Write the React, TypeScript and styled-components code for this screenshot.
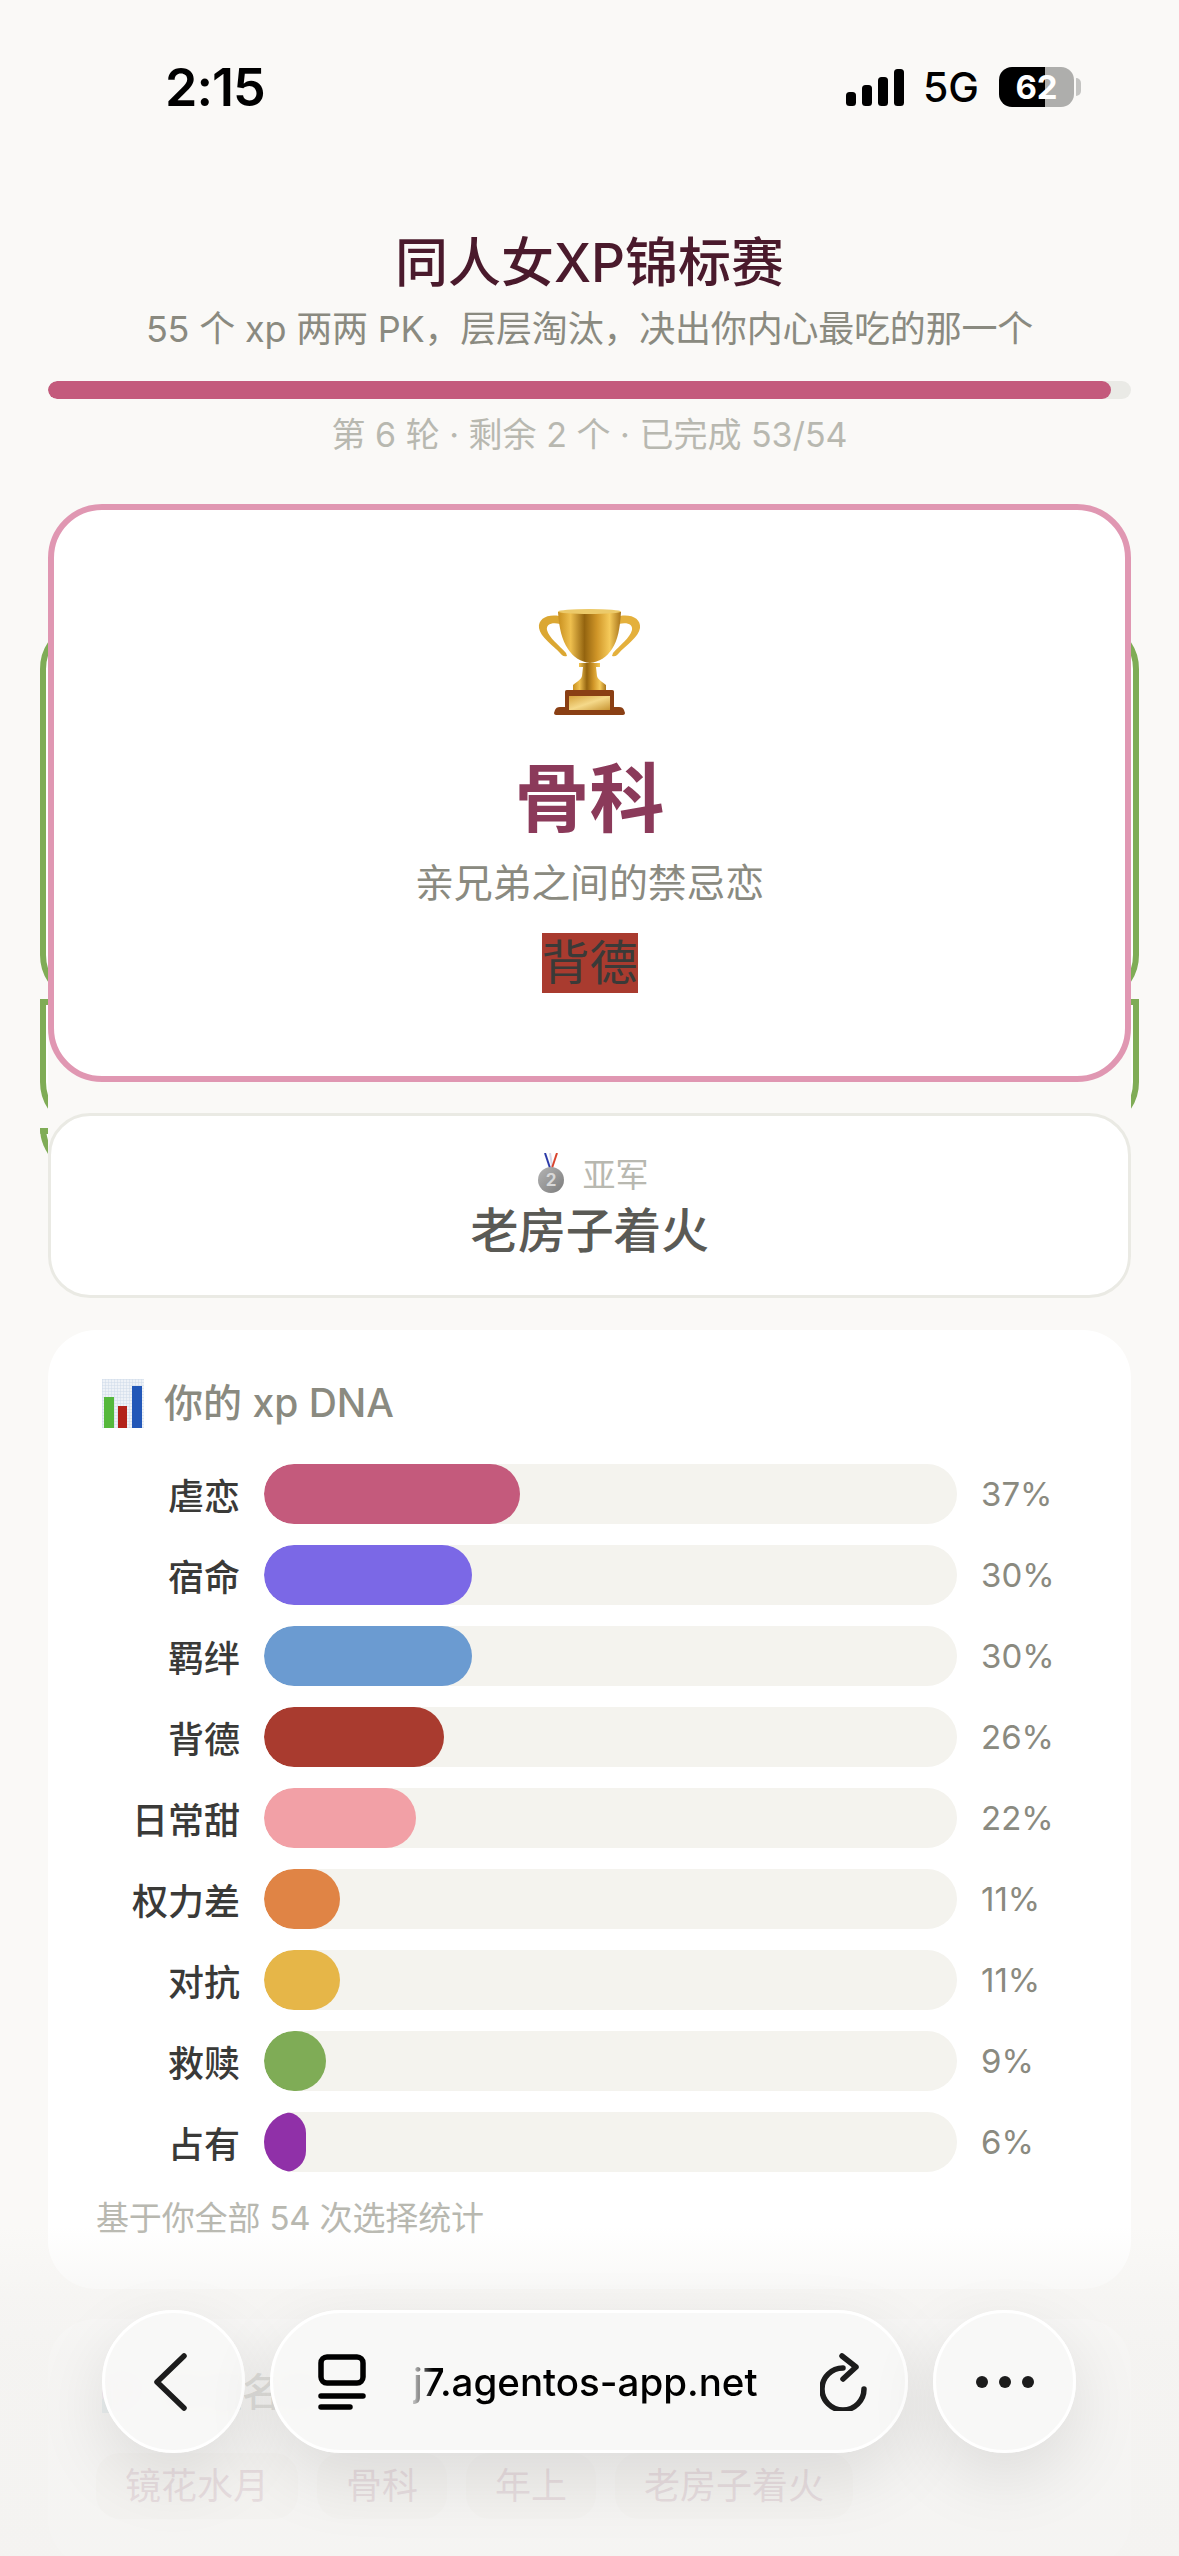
import styled, { createGlobalStyle } from 'styled-components';

const GlobalStyle = createGlobalStyle`
  html, body {
    margin: 0;
    padding: 0;
    background: #faf9f7;
  }
  body {
    font-family: Inter, "Noto Sans CJK SC", sans-serif;
  }
`;

const Page = styled.div`
  position: relative;
  width: 1179px;
  height: 2556px;
  overflow: hidden;
  background: #faf9f7;
`;

const StatusBar = styled.div`
  height: 174px;
  margin-bottom: 53px;
  padding: 0 98px 0 165px;
  box-sizing: border-box;
  display: flex;
  align-items: center;
  justify-content: space-between;
`;

const Clock = styled.div`
  font-size: 52px;
  font-weight: 600;
  letter-spacing: -1px;
  color: #000;
`;

const StatusIcons = styled.div`
  display: flex;
  align-items: center;
`;

const Network = styled.span`
  margin: 0 20px 0 19px;
  font-size: 41px;
  font-weight: 500;
  color: #000;
`;

const Battery = styled.div`
  position: relative;
  width: 75px;
  height: 40px;
  border-radius: 13px;
  overflow: hidden;
  background: linear-gradient(90deg, #000 62%, #aeaeac 62%);
  color: #fff;
  font-size: 33px;
  font-weight: 700;
  line-height: 40px;
  text-align: center;
`;

const BatteryCap = styled.div`
  width: 5px;
  height: 18px;
  margin-left: 2px;
  border-radius: 0 9px 9px 0;
  background: #c4c4c2;
`;

const Header = styled.header`
  text-align: center;
`;

const Title = styled.h1`
  margin: 0;
  font-size: 53px;
  font-weight: 500;
  line-height: 72px;
  color: #4a1a2c;
`;

const Subtitle = styled.p`
  margin: 3px 0 0;
  font-size: 36px;
  letter-spacing: -0.2px;
  line-height: 54px;
  color: #8a8a80;
`;

const ProgressTrack = styled.div`
  height: 18px;
  margin: 25px 48px 0;
  border-radius: 9px;
  overflow: hidden;
  background: #eaeae6;
`;

const ProgressFill = styled.div`
  height: 100%;
  border-radius: 9px;
  background: #c45a7c;
`;

const ProgressMeta = styled.p`
  margin: 16px 0 49px;
  font-size: 34px;
  line-height: 40px;
  text-align: center;
  color: #b8b8b0;
`;

const Stage = styled.section`
  position: relative;
  padding: 0 48px;
`;

// leftovers of the swipe cards peeking out behind the podium
const GhostCard = styled.div<{ $top: number; $height: number; $flatTop?: boolean; $leftOnly?: boolean }>`
  position: absolute;
  top: ${({ $top }) => $top}px;
  left: 40px;
  width: 1099px;
  height: ${({ $height }) => $height}px;
  box-sizing: border-box;
  border: 6px solid #7fac56;
  border-radius: ${({ $flatTop }) => ($flatTop ? '0 0 48px 48px' : '48px')};
  background: #fff;
  clip-path: ${({ $leftOnly }) =>
    $leftOnly
      ? 'polygon(0 0, 8px 0, 8px 100%, 0 100%)'
      : 'polygon(0 0, 8px 0, 8px 100%, 0 100%, 0 0, 100% 0, 100% 100%, calc(100% - 8px) 100%, calc(100% - 8px) 0, 0 0)'};
`;

const ChampionCard = styled.div`
  position: relative;
  height: 578px;
  box-sizing: border-box;
  padding-top: 98px;
  border: 6px solid #e097b2;
  border-radius: 54px;
  background: #fff;
  display: flex;
  flex-direction: column;
  align-items: center;
`;

const ChampionName = styled.div`
  margin-top: 39px;
  font-size: 75px;
  font-weight: 700;
  line-height: 90px;
  color: #8b3a5a;
`;

const ChampionDesc = styled.div`
  margin-top: 12px;
  font-size: 39px;
  letter-spacing: -0.2px;
  line-height: 54px;
  color: #8a8a80;
`;

const ChampionTag = styled.span`
  margin-top: 23px;
  width: 96px;
  font-size: 48px;
  line-height: 60px;
  white-space: nowrap;
  background: #a93b2f;
  color: #3a3a38;
`;

const RunnerCard = styled.div`
  position: relative;
  height: 185px;
  margin-top: 31px;
  box-sizing: border-box;
  padding-top: 37px;
  border: 3px solid #eaeae4;
  border-radius: 42px;
  background: #fff;
  display: flex;
  flex-direction: column;
  align-items: center;
`;

const RunnerLabel = styled.div`
  height: 40px;
  padding-left: 6px;
  display: flex;
  align-items: center;
  gap: 18px;
  font-size: 33px;
  color: #b8b8b0;
`;

const RunnerName = styled.div`
  margin-top: 6px;
  font-size: 48px;
  font-weight: 500;
  letter-spacing: -0.4px;
  line-height: 64px;
  color: #5a5a55;
`;

const Panel = styled.section<{ $gap: number }>`
  margin: ${({ $gap }) => $gap}px 48px 0;
  padding: 48px;
  border-radius: 48px;
  background: #fff;
`;

const PanelTitle = styled.h2`
  margin: 0 0 36px 6px;
  display: flex;
  align-items: center;
  gap: 20px;
  font-size: 39px;
  font-weight: 500;
  line-height: 50px;
  color: #8a8a80;
`;

const Bars = styled.div`
  display: flex;
  flex-direction: column;
  gap: 21px;
`;

const BarRow = styled.div`
  display: grid;
  grid-template-columns: 144px 1fr 102px;
  column-gap: 24px;
  align-items: center;
`;

const BarLabel = styled.span`
  font-size: 36px;
  font-weight: 500;
  text-align: right;
  color: #3a3a38;
`;

const BarTrack = styled.div`
  height: 60px;
  border-radius: 30px;
  overflow: hidden;
  background: #f4f3ee;
`;

const BarFill = styled.div<{ $color: string }>`
  height: 100%;
  border-radius: 30px;
  background: ${({ $color }) => $color};
`;

const BarValue = styled.span`
  font-size: 33px;
  color: #8a8a80;
`;

const PanelNote = styled.p`
  margin: 24px 0 0;
  font-size: 33px;
  letter-spacing: -0.15px;
  line-height: 45px;
  color: #b8b8b0;
`;

const ChipRow = styled.div`
  display: flex;
  gap: 19px;
`;

const Chip = styled.span`
  padding: 0 29px;
  border-radius: 24px;
  font-size: 36px;
  line-height: 66px;
  background: #f4f2ee;
  color: #a8748a;
`;

const BottomFade = styled.div`
  position: absolute;
  left: 0;
  right: 0;
  bottom: 0;
  height: 330px;
  background: linear-gradient(
    180deg,
    rgba(243, 242, 240, 0) 0%,
    rgba(243, 242, 240, 0.6) 22%,
    rgba(243, 242, 240, 0.8) 40%,
    rgba(243, 242, 240, 0.84) 100%
  );
`;

const BrowserBar = styled.nav`
  position: absolute;
  left: 102px;
  top: 2310px;
  display: flex;
  gap: 25px;
`;

const Pill = styled.div<{ $wide?: boolean }>`
  width: ${({ $wide }) => ($wide ? '638px' : '143px')};
  height: 143px;
  box-sizing: border-box;
  border: 3px solid #fff;
  border-radius: 72px;
  background: rgba(248, 248, 247, 0.94);
  backdrop-filter: blur(8px);
  box-shadow: 0 24px 70px rgba(0, 0, 0, 0.1);
  display: flex;
  align-items: center;
  justify-content: center;
`;

const UrlPill = styled(Pill)`
  justify-content: flex-start;
  padding-left: 45px;
`;

const UrlText = styled.span`
  margin-left: 47px;
  width: 346px;
  font-size: 38.5px;
  font-weight: 500;
  white-space: nowrap;
  color: #000;
  mask-image: linear-gradient(90deg, rgba(0, 0, 0, 0.2), #000 20px);
`;

const ReloadWrap = styled.span`
  margin-left: 61px;
  display: flex;
`;

const BackGlyph = styled.svg`
  margin-right: 8px;
`;

const Trophy = () => (
  <svg width="103" height="107" viewBox="0 0 103 107">
    <defs>
      <linearGradient id="cup" x1="0" x2="1" y1="0" y2="0">
        <stop offset="0" stopColor="#c88f1e" />
        <stop offset="0.2" stopColor="#eebf4e" />
        <stop offset="0.42" stopColor="#94640f" />
        <stop offset="0.62" stopColor="#d09628" />
        <stop offset="0.82" stopColor="#f5ca5a" />
        <stop offset="1" stopColor="#a8741a" />
      </linearGradient>
      <linearGradient id="plate" x1="0" x2="1" y1="0" y2="1">
        <stop offset="0" stopColor="#d7a33c" />
        <stop offset="0.5" stopColor="#f5d98a" />
        <stop offset="1" stopColor="#c89532" />
      </linearGradient>
    </defs>
    <path d="M21 8C9 6 0 11 1 20c1 9 15 18 21 25 2 2 3 4 7 3l-1-3c-7-8-17-15-19-23-1-5 4-8 13-6z" fill="#dba732" />
    <path d="M82 8c12-2 21 3 20 12-1 9-15 18-21 25-2 2-3 4-7 3l1-3c7-8 17-15 19-23 1-5-4-8-13-6z" fill="#e4b03c" />
    <path d="M20 4c20-3 43-3 63 0-1 16-3 28-9 37-5 8-13 13-22 14-9-1-17-6-22-14-6-9-9-21-10-37z" fill="url(#cup)" />
    <ellipse cx="51.5" cy="3.5" rx="31.5" ry="2.5" fill="#ecca6a" />
    <path d="M41 55h21v4h-4l1 9c1 4 6 6 9 9v5H35v-5c3-3 8-5 9-9l1-9h-4z" fill="url(#cup)" />
    <path d="M29 82h45c2 0 2 1 2 3v14H27V85c0-2 0-3 2-3z" fill="#8a3f14" />
    <path d="M22 99h59c3 0 4 1 5 3l1 3c0 1-1 2-2 2H18c-1 0-2-1-2-2l1-3c1-2 2-3 5-3z" fill="#8a3f14" />
    <rect x="31" y="88" width="41" height="14" fill="url(#plate)" />
  </svg>
);

const SilverMedal = () => (
  <svg width="28" height="40" viewBox="0 0 28 40">
    <defs>
      <linearGradient id="silver" x1="0" x2="1" y1="0" y2="1">
        <stop offset="0" stopColor="#b4b4b4" />
        <stop offset="1" stopColor="#7c7c7c" />
      </linearGradient>
    </defs>
    <path d="M8 0l5 15" stroke="#2b3aa8" strokeWidth="2" fill="none" />
    <path d="M13 0l2 13" stroke="#d9d9e8" strokeWidth="2" fill="none" />
    <path d="M20 0l-5 15" stroke="#d9442e" strokeWidth="2" fill="none" />
    <circle cx="14" cy="27" r="13" fill="url(#silver)" />
    <text x="14" y="33" textAnchor="middle" fontSize="17" fontWeight="700" fontFamily="Inter" fill="#d8d8d8">
      2
    </text>
  </svg>
);

const ChartEmoji = () => (
  <svg width="42" height="49" viewBox="0 0 42 49">
    <defs>
      <pattern id="grid" width="3" height="3" patternUnits="userSpaceOnUse">
        <rect width="3" height="3" fill="#eef2f7" />
        <path d="M0 0h3M0 0v3" stroke="#cfdbe9" strokeWidth="1" />
      </pattern>
    </defs>
    <rect width="42" height="49" fill="url(#grid)" />
    <rect x="2" y="18" width="10" height="31" fill="#55b83c" />
    <rect x="16" y="27" width="9" height="22" fill="#b3221a" />
    <rect x="30" y="7" width="10" height="42" fill="#2257b8" />
  </svg>
);

const SmudgeEmoji = () => (
  <svg width="42" height="46" viewBox="0 0 42 46">
    <path d="M4 8c10-8 28-8 34 2s0 28-14 32S0 36 0 26 0 12 4 8z" fill="#e6c4ea" />
    <rect x="0" y="30" width="10" height="14" fill="#b9d8e0" />
  </svg>
);

const ChevronLeft = () => (
  <BackGlyph width="36" height="58" viewBox="0 0 36 58">
    <path d="M32 3L5 29l27 26" fill="none" stroke="#1c1c1c" strokeWidth="5.5" strokeLinecap="round" strokeLinejoin="round" />
  </BackGlyph>
);

const TabsIcon = () => (
  <svg width="48" height="56" viewBox="0 0 48 56">
    <rect x="3" y="3" width="42" height="26" rx="6" fill="none" stroke="#000" strokeWidth="5.5" />
    <path d="M3 42h42M3 53h29" stroke="#000" strokeWidth="5.5" strokeLinecap="round" />
  </svg>
);

const ReloadIcon = () => (
  <svg width="50" height="58" viewBox="0 0 50 58">
    <path d="M23 15a21 21 0 1 0 21 21" fill="none" stroke="#1c1c1c" strokeWidth="5.5" strokeLinecap="round" />
    <path d="M22 3l14 11-13 12" fill="none" stroke="#1c1c1c" strokeWidth="5.5" strokeLinecap="round" strokeLinejoin="round" />
  </svg>
);

const MoreIcon = () => (
  <svg width="60" height="14" viewBox="0 0 60 14">
    <circle cx="7" cy="7" r="6" fill="#1c1c1c" />
    <circle cx="30" cy="7" r="6" fill="#1c1c1c" />
    <circle cx="53" cy="7" r="6" fill="#1c1c1c" />
  </svg>
);

const SignalIcon = () => (
  <svg width="58" height="37" viewBox="0 0 58 37">
    <rect x="0" y="23" width="10" height="14" rx="3.5" fill="#000" />
    <rect x="16" y="16" width="10" height="21" rx="3.5" fill="#000" />
    <rect x="32" y="8" width="10" height="29" rx="3.5" fill="#000" />
    <rect x="48" y="0" width="10" height="37" rx="3.5" fill="#000" />
  </svg>
);

const dna = [
  { label: '虐恋', value: 37, color: '#c45a7c' },
  { label: '宿命', value: 30, color: '#7b68e6' },
  { label: '羁绊', value: 30, color: '#6b9bd1' },
  { label: '背德', value: 26, color: '#a93b2f' },
  { label: '日常甜', value: 22, color: '#f2a0a6' },
  { label: '权力差', value: 11, color: '#e08445' },
  { label: '对抗', value: 11, color: '#e6b648' },
  { label: '救赎', value: 9, color: '#7fac56' },
  { label: '占有', value: 6, color: '#9030a8' },
];

const finalists = ['镜花水月', '骨科', '年上', '老房子着火'];

export default function App() {
  return (
    <Page>
      <GlobalStyle />
      <StatusBar>
        <Clock>2:15</Clock>
        <StatusIcons>
          <SignalIcon />
          <Network>5G</Network>
          <Battery>62</Battery>
          <BatteryCap />
        </StatusIcons>
      </StatusBar>

      <Header>
        <Title>同人女XP锦标赛</Title>
        <Subtitle>55 个 xp 两两 PK，层层淘汰，决出你内心最吃的那一个</Subtitle>
      </Header>
      <ProgressTrack>
        <ProgressFill style={{ width: `${(53 / 54) * 100}%` }} />
      </ProgressTrack>
      <ProgressMeta>第 6 轮 · 剩余 2 个 · 已完成 53/54</ProgressMeta>

      <Stage>
        <GhostCard $top={117} $height={382} />
        <GhostCard $top={495} $height={131} $flatTop />
        <GhostCard $top={624} $height={45} $flatTop $leftOnly />
        <ChampionCard>
          <Trophy />
          <ChampionName>骨科</ChampionName>
          <ChampionDesc>亲兄弟之间的禁忌恋</ChampionDesc>
          <ChampionTag>背德</ChampionTag>
        </ChampionCard>
        <RunnerCard>
          <RunnerLabel>
            <SilverMedal />
            亚军
          </RunnerLabel>
          <RunnerName>老房子着火</RunnerName>
        </RunnerCard>
      </Stage>

      <Panel $gap={32}>
        <PanelTitle>
          <ChartEmoji />
          你的 xp DNA
        </PanelTitle>
        <Bars>
          {dna.map((item) => (
            <BarRow key={item.label}>
              <BarLabel>{item.label}</BarLabel>
              <BarTrack>
                <BarFill $color={item.color} style={{ width: `${item.value}%` }} />
              </BarTrack>
              <BarValue>{item.value}%</BarValue>
            </BarRow>
          ))}
        </Bars>
        <PanelNote>基于你全部 54 次选择统计</PanelNote>
      </Panel>

      <Panel $gap={30}>
        <PanelTitle>
          <SmudgeEmoji />
          四强名单
        </PanelTitle>
        <ChipRow>
          {finalists.map((name) => (
            <Chip key={name}>{name}</Chip>
          ))}
        </ChipRow>
      </Panel>

      <BottomFade />
      <BrowserBar>
        <Pill>
          <ChevronLeft />
        </Pill>
        <UrlPill $wide>
          <TabsIcon />
          <UrlText>j7.agentos-app.net</UrlText>
          <ReloadWrap>
            <ReloadIcon />
          </ReloadWrap>
        </UrlPill>
        <Pill>
          <MoreIcon />
        </Pill>
      </BrowserBar>
    </Page>
  );
}
